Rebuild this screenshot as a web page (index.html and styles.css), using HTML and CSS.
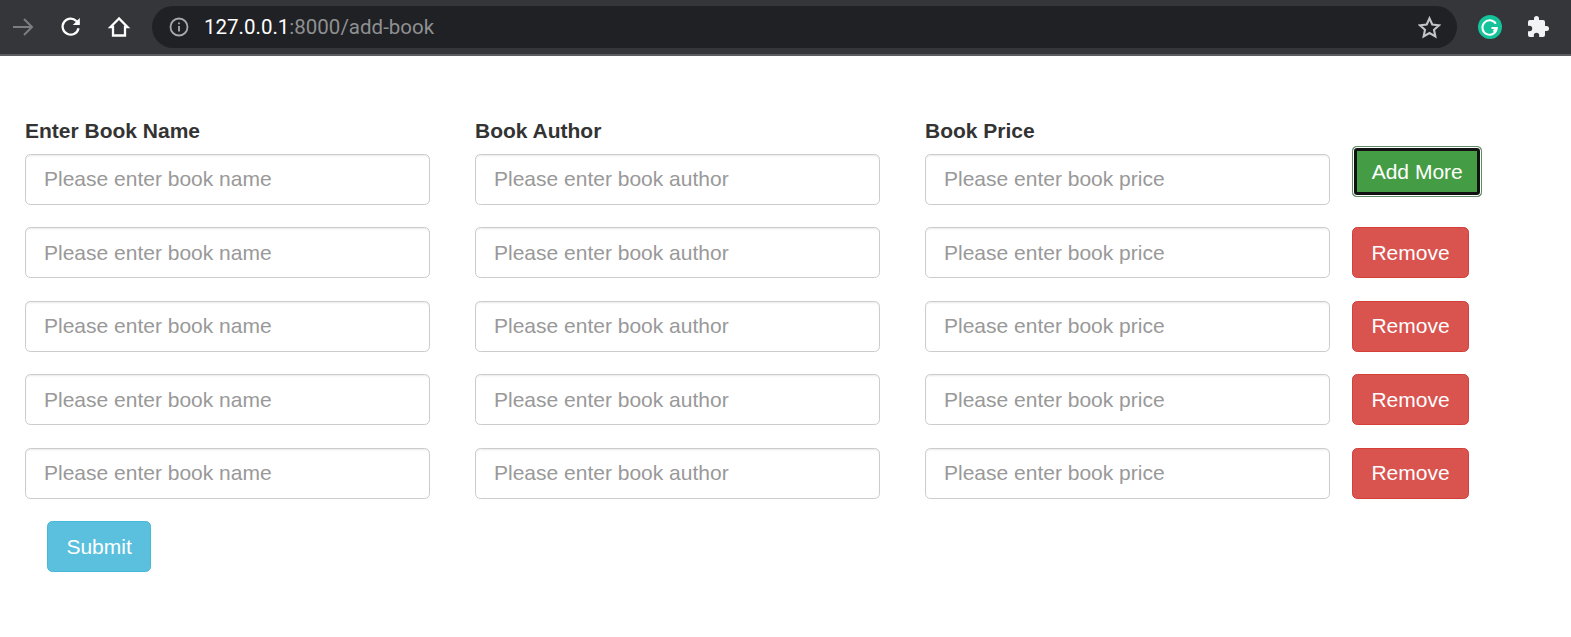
FILE: index.html
```html
<!DOCTYPE html>
<html lang="en">
<head>
<meta charset="utf-8">
<title>Add book</title>
<link rel="stylesheet" href="styles.css">
</head>
<body>
<header class="toolbar">
  <svg class="nav-icon forward" viewBox="0 0 24 24"><path d="M2 12H21M13 4l8 8-8 8"/></svg>
  <svg class="nav-icon" viewBox="0 0 24 24"><path d="M19.5 13.2A8 8 0 1 1 17.3 6L20 8.6"/><path class="solid" d="M20.8 3v7h-7z"/></svg>
  <svg class="nav-icon home" viewBox="0 0 24 24"><path d="M12 3.500 3.500 12H6V20.500H18V12H20.500Z"/></svg>
  <div class="omnibox">
    <svg class="info" viewBox="0 0 20 20"><circle cx="10" cy="10" r="8.500"/><path d="M10 9v5.500M10 5.500v1.800"/></svg>
    <span class="url"><span class="host">127.0.0.1</span>:8000/add-book</span>
    <svg class="star" viewBox="0 0 24 24"><path d="M12 2.500l2.900 6.400 7 .8-5.200 4.700 1.400 6.900-6.100-3.500-6.100 3.500 1.400-6.900L2.100 9.700l7-.8z"/></svg>
  </div>
  <svg class="grammarly" viewBox="0 0 24 24"><circle class="g-bg" cx="12" cy="12" r="12"/><path class="g-mark" d="M17.800 8.800A7.200 7.200 0 1 0 18.800 13H13.500"/><path class="g-mark" d="M15.500 16.500 18.800 13"/></svg>
  <svg class="puzzle" viewBox="0 0 24 24"><path d="M20.500 11H19V7a2 2 0 0 0-2-2h-4V3.500a2.500 2.500 0 0 0-5 0V5H4a2 2 0 0 0-2 2v3.800h1.500a2.700 2.700 0 0 1 0 5.400H2V20a2 2 0 0 0 2 2h3.800v-1.500a2.700 2.700 0 0 1 5.400 0V22H17a2 2 0 0 0 2-2v-4h1.500a2.500 2.500 0 0 0 0-5z"/></svg>
</header>
<main class="page">
  <form class="book-form">
    <div class="labels">
      <label class="cell">Enter Book Name</label>
      <label class="cell">Book Author</label>
      <label class="cell">Book Price</label>
    </div>
    <div class="row">
      <div class="cell"><input class="field" placeholder="Please enter book name"></div>
      <div class="cell"><input class="field" placeholder="Please enter book author"></div>
      <div class="cell"><input class="field" placeholder="Please enter book price"></div>
      <button type="button" class="btn add">Add More</button>
    </div>
    <div class="row">
      <div class="cell"><input class="field" placeholder="Please enter book name"></div>
      <div class="cell"><input class="field" placeholder="Please enter book author"></div>
      <div class="cell"><input class="field" placeholder="Please enter book price"></div>
      <button type="button" class="btn remove">Remove</button>
    </div>
    <div class="row">
      <div class="cell"><input class="field" placeholder="Please enter book name"></div>
      <div class="cell"><input class="field" placeholder="Please enter book author"></div>
      <div class="cell"><input class="field" placeholder="Please enter book price"></div>
      <button type="button" class="btn remove">Remove</button>
    </div>
    <div class="row">
      <div class="cell"><input class="field" placeholder="Please enter book name"></div>
      <div class="cell"><input class="field" placeholder="Please enter book author"></div>
      <div class="cell"><input class="field" placeholder="Please enter book price"></div>
      <button type="button" class="btn remove">Remove</button>
    </div>
    <div class="row">
      <div class="cell"><input class="field" placeholder="Please enter book name"></div>
      <div class="cell"><input class="field" placeholder="Please enter book author"></div>
      <div class="cell"><input class="field" placeholder="Please enter book price"></div>
      <button type="button" class="btn remove">Remove</button>
    </div>
    <button type="submit" class="btn submit">Submit</button>
  </form>
</main>
</body>
</html>
```
FILE: styles.css
```css
* { box-sizing: border-box; }
html, body { margin: 0; padding: 0; background: #fff; overflow: hidden; }
body { font-family: "Liberation Sans", Arial, sans-serif; color: #333; }

.toolbar {
  height: 56px;
  background: #35363a;
  border-bottom: 2px solid #5c5d60;
  display: flex;
  align-items: center;
  padding: 0 0 0 11px;
}
.nav-icon { width: 24px; height: 24px; fill: none; stroke: #fff; stroke-width: 2.300; margin-right: 24px; flex: none; }
.nav-icon .solid { fill: #fff; stroke: none; }
.forward { stroke: #7d7e80; stroke-width: 2; }
.home { margin-right: 21px; }
.omnibox {
  width: 1305px;
  height: 42px;
  background: #202124;
  border-radius: 21px;
  display: flex;
  align-items: center;
  padding: 0 16px 0 17px;
  flex: none;
}
.info { width: 20px; height: 20px; fill: none; stroke: #a8a9ab; stroke-width: 1.800; flex: none; }
.url { margin-left: 15px; font-family: Roboto, sans-serif; font-size: 20.500px; color: #8f9092; flex: 1; }
.host { color: #fff; }
.star { width: 23px; height: 23px; fill: none; stroke: #c4c5c7; stroke-width: 2.200; flex: none; }
.grammarly { width: 24px; height: 24px; margin-left: 21px; flex: none; }
.g-bg { fill: #15c39a; }
.g-mark { fill: none; stroke: #fff; stroke-width: 2; }
.puzzle { width: 24px; height: 24px; margin-left: 24px; fill: #f1f3f4; flex: none; }

.page { padding: 61px 25px 0; }
.labels, .row { display: grid; grid-template-columns: 450px 450px 427px auto; align-items: start; }
.labels { font-size: 21px; font-weight: 700; line-height: 28px; margin-bottom: 8.800px; }
.row { margin-bottom: 22.500px; height: 51px; }
.field {
  display: block;
  width: 405px;
  height: 51px;
  padding: 0 18px;
  font: 21px "Liberation Sans", Arial, sans-serif;
  color: #555;
  background: #fff;
  border: 1.300px solid #ccc;
  border-radius: 5.300px;
  box-shadow: inset 0 1.300px 1.300px rgba(0, 0, 0, .075);
}
.field::placeholder { color: #999; opacity: 1; }
.btn {
  height: 51px;
  padding: 0 18.400px;
  font: 21px "Liberation Sans", Arial, sans-serif;
  color: #fff;
  border: 1.300px solid transparent;
  border-radius: 5.300px;
  justify-self: start;
}
.add {
  margin-top: -8px;
  padding: 1px 19.700px 0;
  background: #449d44;
  border: 0;
  box-shadow: inset 0 0 0 1px #5f8a66, inset 0 0 0 2px #fff, inset 0 0 0 5px #111;
}
.remove { background: #d9534f; border-color: #d43f3a; }
.submit { display: block; margin-left: 22px; padding-top: 1px; background: #5bc0de; border-color: #46b8da; }
```
